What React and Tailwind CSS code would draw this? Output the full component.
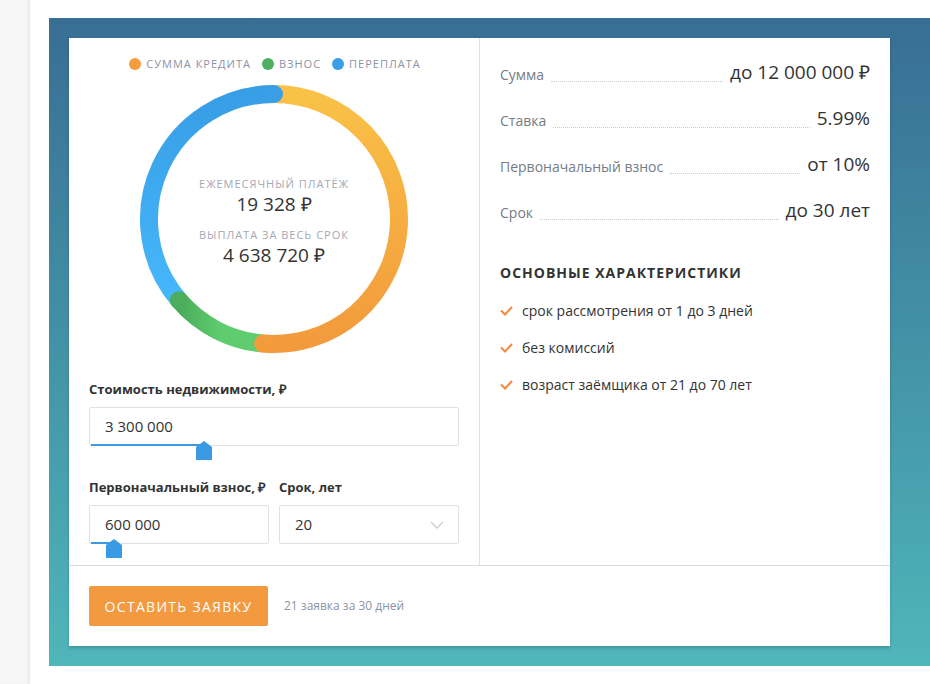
import React from "react";

const FONT = { fontFamily: '"Open Sans", "Liberation Sans", sans-serif' };

const LEGEND = [
  { label: "Сумма кредита", dot: "bg-[#f49c3e]" },
  { label: "Взнос", dot: "bg-[#4eb060]" },
  { label: "Переплата", dot: "bg-[#3a9fe6]" },
];

const TERMS = [
  { label: "Сумма", value: "до 12 000 000 ₽" },
  { label: "Ставка", value: "5.99%" },
  { label: "Первоначальный взнос", value: "от 10%" },
  { label: "Срок", value: "до 30 лет" },
];

const FEATURES = [
  "срок рассмотрения от 1 до 3 дней",
  "без комиссий",
  "возраст заёмщика от 21 до 70 лет",
];

// point on the ring, angle clockwise from 12 o'clock
function pt(deg, r = 125, c = 135) {
  const a = (deg * Math.PI) / 180;
  return [c + r * Math.sin(a), c - r * Math.cos(a)];
}

function arc(from, to) {
  const [x1, y1] = pt(from);
  const [x2, y2] = pt(to);
  const large = to - from > 180 ? 1 : 0;
  return `M ${x1} ${y1} A 125 125 0 ${large} 1 ${x2} ${y2}`;
}

function Donut() {
  const oEnd = pt(185);
  const gEnd = pt(229.5);
  const bEnd = pt(360);
  return (
    <div className="relative mx-auto mt-[12px] h-[270px] w-[270px]">
      <svg width="270" height="270" viewBox="0 0 270 270">
        <defs>
          <linearGradient id="go" x1="0" y1="0" x2="0" y2="1">
            <stop offset="0" stopColor="#f9c146" />
            <stop offset="1" stopColor="#f29a3c" />
          </linearGradient>
          <linearGradient id="gb" x1="0" y1="0" x2="0" y2="1">
            <stop offset="0" stopColor="#389ee5" />
            <stop offset="1" stopColor="#46b7fb" />
          </linearGradient>
          <linearGradient id="gg" x1="0" y1="0" x2="1" y2="0">
            <stop offset="0" stopColor="#4aab5b" />
            <stop offset="0.5" stopColor="#5fcd6f" />
          </linearGradient>
        </defs>
        <path d={arc(0, 185)} fill="none" stroke="url(#go)" strokeWidth="18" />
        <path d={arc(185, 229.5)} fill="none" stroke="url(#gg)" strokeWidth="18" />
        <path d={arc(229.5, 360)} fill="none" stroke="url(#gb)" strokeWidth="18" />
        <circle cx={oEnd[0]} cy={oEnd[1]} r="9" fill="#f39c3c" />
        <circle cx={gEnd[0]} cy={gEnd[1]} r="9" fill="#4cae5d" />
        <circle cx={bEnd[0]} cy={bEnd[1]} r="9" fill="#3a9fe6" />
      </svg>
      <div className="absolute inset-0 flex flex-col items-center justify-center pt-[4px] text-center">
        <div className="text-[11px] leading-[14px] tracking-[1px] text-[#a4a8b6] uppercase">Ежемесячный платёж</div>
        <div className="mt-[2px] text-[19px] leading-[22px] text-[#333]">19 328 ₽</div>
        <div className="mt-[13px] text-[11px] leading-[14px] tracking-[1px] text-[#a4a8b6] uppercase">Выплата за весь срок</div>
        <div className="mt-[2px] text-[19px] leading-[22px] text-[#333]">4 638 720 ₽</div>
      </div>
    </div>
  );
}

function Thumb({ left }) {
  return (
    <svg
      className="absolute top-[33px]"
      style={{ left: left - 9 }}
      width="16"
      height="19"
      viewBox="0 0 16 19"
    >
      <path d="M0 6 L8 0 L16 6 L16 19 L0 19 Z" fill="#3a9ae3" />
    </svg>
  );
}

function SliderInput({ value, fill }) {
  return (
    <div className="relative h-[39px] rounded-[2px] border border-[#dfe1e7] bg-white">
      <div className="pl-[15px] text-[15px] leading-[37px] text-[#333]">{value}</div>
      <div className="absolute bottom-[-1px] left-[1px] h-[2px] bg-[#3a9ae3]" style={{ width: fill }} />
      <Thumb left={fill} />
    </div>
  );
}

export default function App() {
  return (
    <div className="flex h-[684px] overflow-hidden bg-white" style={FONT}>
      <div className="w-[30px] shrink-0 bg-[#f7f7f7] shadow-[inset_-3px_0_3px_-1px_rgba(0,0,0,0.06)]" />
      <div className="flex-1 pl-[19px] pt-[18px]">
        <div className="h-[648px] bg-gradient-to-b from-[#386e93] to-[#4fb6b9] p-[20px]">
          <div className="w-[821px] bg-white shadow-[0_2px_3px_rgba(0,0,0,0.18)]">
            <div className="flex h-[528px] border-b border-[#d9dbe2]">
              {/* left: chart and inputs */}
              <div className="w-[411px] border-r border-[#dfe1e7] px-[20px] pt-[18px]">
                <div className="flex items-center justify-center gap-[11px] pl-[2px]">
                  {LEGEND.map((l) => (
                    <div key={l.label} className="flex items-center gap-[5px]">
                      <span className={`h-[12px] w-[12px] rounded-full ${l.dot}`} />
                      <span className="text-[11px] leading-[16px] tracking-[1px] text-[#8d92a3] uppercase">{l.label}</span>
                    </div>
                  ))}
                </div>
                <Donut />
                <div className="mt-[26px] text-[13px] leading-[18px] font-bold text-[#333]">Стоимость недвижимости, ₽</div>
                <div className="mt-[9px]">
                  <SliderInput value="3 300 000" fill={115} />
                </div>
                <div className="mt-[32px] flex gap-[10px]">
                  <div className="w-[180px]">
                    <div className="text-[13px] leading-[18px] font-bold text-[#333]">Первоначальный взнос, ₽</div>
                    <div className="mt-[9px]">
                      <SliderInput value="600 000" fill={25} />
                    </div>
                  </div>
                  <div className="flex-1">
                    <div className="text-[13px] leading-[18px] font-bold text-[#333]">Срок, лет</div>
                    <div className="mt-[9px] flex h-[39px] items-center justify-between rounded-[2px] border border-[#dfe1e7] pr-[14px] pl-[15px]">
                      <span className="text-[15px] text-[#333]">20</span>
                      <svg width="14" height="8" viewBox="0 0 14 8">
                        <path d="M1 1 L7 7 L13 1" fill="none" stroke="#c9ccd4" strokeWidth="1.3" />
                      </svg>
                    </div>
                  </div>
                </div>
              </div>

              {/* right: terms */}
              <div className="flex-1 pt-[22px] pr-[20px] pl-[20px]">
                <div className="flex flex-col gap-[21px]">
                  {TERMS.map((t) => (
                    <div key={t.label} className="flex items-end">
                      <span className="text-[14px] leading-[20px] text-[#777b86]">{t.label}</span>
                      <span className="mx-[7px] mb-[3px] flex-1 border-b border-dotted border-[#c9ccd4]" />
                      <span className="text-[19px] leading-[25px] text-[#333]">{t.value}</span>
                    </div>
                  ))}
                </div>
                <div className="mt-[40px] text-[14px] leading-[20px] font-bold tracking-[1px] text-[#333] uppercase">Основные характеристики</div>
                <div className="mt-[18px] flex flex-col gap-[17px]">
                  {FEATURES.map((f) => (
                    <div key={f} className="flex items-center gap-[9px]">
                      <svg width="13" height="10" viewBox="0 0 13 10">
                        <path d="M1 4.5 L5 8.5 L12 1" fill="none" stroke="#f5873a" strokeWidth="2" />
                      </svg>
                      <span className="text-[14px] leading-[20px] text-[#333]">{f}</span>
                    </div>
                  ))}
                </div>
              </div>
            </div>

            {/* footer */}
            <div className="flex h-[80px] items-center gap-[16px] px-[20px]">
              <button className="h-[40px] w-[179px] rounded-[2px] bg-[#f39a40] text-[14px] tracking-[1.3px] text-white uppercase">
                Оставить заявку
              </button>
              <span className="text-[12px] text-[#8d92a3]">21 заявка за 30 дней</span>
            </div>
          </div>
        </div>
      </div>
    </div>
  );
}
